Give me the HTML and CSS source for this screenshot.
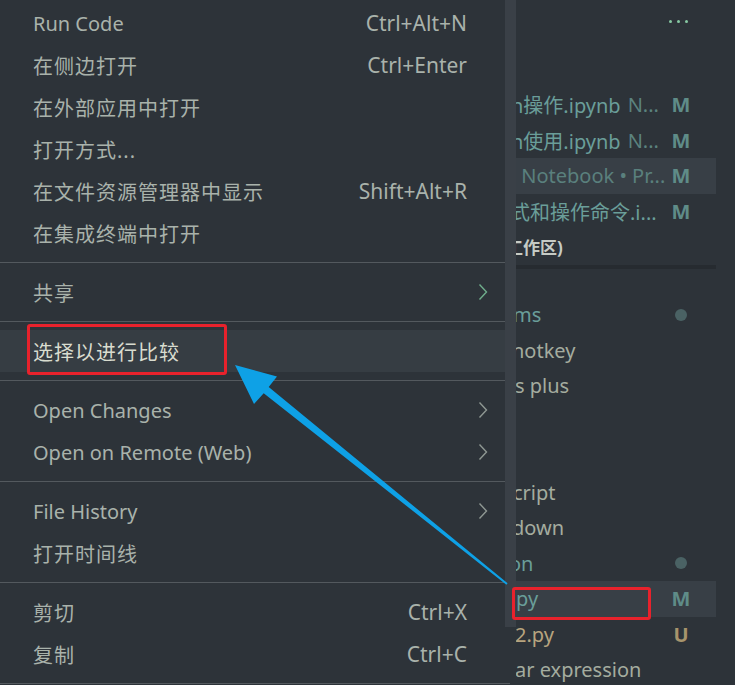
FILE: index.html
```html
<!DOCTYPE html>
<html lang="zh">
<head>
<meta charset="utf-8">
<title>Context menu</title>
<link rel="stylesheet" href="styles.css">
</head>
<body>
<div class="screen">
  <div class="menu">
    <div class="item"><span class="label">Run Code</span><span class="key">Ctrl+Alt+N</span></div>
    <div class="item"><span class="label zh">在侧边打开</span><span class="key">Ctrl+Enter</span></div>
    <div class="item"><span class="label zh">在外部应用中打开</span></div>
    <div class="item"><span class="label zh">打开方式...</span></div>
    <div class="item"><span class="label zh">在文件资源管理器中显示</span><span class="key">Shift+Alt+R</span></div>
    <div class="item"><span class="label zh">在集成终端中打开</span></div>
    <div class="sep"></div>
    <div class="item"><span class="label zh">共享</span><svg class="chev chev-green" viewBox="0 0 10 18" width="10" height="18"><path d="M1.5 1.5 L8.5 9 L1.5 16.5" fill="none" stroke="currentColor" stroke-width="1.4"/></svg></div>
    <div class="sep"></div>
    <div class="item active"><span class="label zh">选择以进行比较</span></div>
    <div class="sep"></div>
    <div class="item"><span class="label">Open Changes</span><svg class="chev" viewBox="0 0 10 18" width="10" height="18"><path d="M1.5 1.5 L8.5 9 L1.5 16.5" fill="none" stroke="currentColor" stroke-width="1.4"/></svg></div>
    <div class="item"><span class="label">Open on Remote (Web)</span><svg class="chev" viewBox="0 0 10 18" width="10" height="18"><path d="M1.5 1.5 L8.5 9 L1.5 16.5" fill="none" stroke="currentColor" stroke-width="1.4"/></svg></div>
    <div class="sep"></div>
    <div class="item"><span class="label">File History</span><svg class="chev" viewBox="0 0 10 18" width="10" height="18"><path d="M1.5 1.5 L8.5 9 L1.5 16.5" fill="none" stroke="currentColor" stroke-width="1.4"/></svg></div>
    <div class="item"><span class="label zh">打开时间线</span></div>
    <div class="sep"></div>
    <div class="item"><span class="label zh">剪切</span><span class="key">Ctrl+X</span></div>
    <div class="item"><span class="label zh">复制</span><span class="key">Ctrl+C</span></div>
    <div class="sep"></div>
    <div class="scroll-thumb"></div>
  </div>

  <div class="sidebar">
    <div class="side-head"><span class="more"><i></i><i></i><i></i></span></div>
    <div class="group">
      <div class="row"><span class="name teal cut5">n操作.ipynb</span><span class="desc">N...</span><span class="badge m">M</span></div>
      <div class="row"><span class="name teal cut5">n使用.ipynb</span><span class="desc">N...</span><span class="badge m">M</span></div>
      <div class="row selected"><span class="name dimteal cut0">&nbsp;Notebook • Pr...</span><span class="badge m">M</span></div>
      <div class="row"><span class="name teal cut6">式和操作命令.i...</span><span class="badge m">M</span></div>
      <div class="row"><span class="name bold cut10">工作区)</span></div>
    </div>
    <div class="divider"></div>
    <div class="group">
      <div class="row"><span class="name teal cut3">ms</span><span class="badge"><b class="dot"></b></span></div>
      <div class="row"><span class="name gray cut4">hotkey</span></div>
      <div class="row"><span class="name gray cut1">s plus</span></div>
      <div class="row"></div>
      <div class="row"></div>
      <div class="row"><span class="name gray cut3">cript</span></div>
      <div class="row"><span class="name gray cut4">down</span></div>
      <div class="row"><span class="name teal cut7">on</span><span class="badge"><b class="dot"></b></span></div>
      <div class="row selected"><span class="name teal cut0">py</span><span class="badge m">M</span></div>
      <div class="row"><span class="name beige cut1">2.py</span><span class="badge u">U</span></div>
      <div class="row"><span class="name gray cut1">ar expression</span></div>
    </div>
  </div>

  <div class="mark mark-menu"></div>
  <div class="mark mark-file"></div>
  <svg class="arrow" viewBox="0 0 735 685" width="735" height="685">
    <polygon fill="#0ea1e6" points="507.6,583.3 506.4,584.7 263.7,393.2 254.0,404.0 235,365 277.0,376.6 268.7,387.0"/>
  </svg>
</div>
</body>
</html>
```
FILE: styles.css
```css
* { box-sizing: border-box; }
html, body { margin: 0; padding: 0; }
body {
  background: #2d3339;
  font-family: "Noto Sans", "Noto Sans CJK SC", sans-serif;
  font-size: 20px;
  color: #a9b2ab;
  width: 735px;
  height: 685px;
  overflow: hidden;
}
.screen {
  position: relative;
  display: flex;
  width: 735px;
  height: 685px;
}
.menu {
  position: relative;
  width: 516px;
  flex: none;
  padding: 2px 6px 0 0;
  background: #2d3339;
}
.item {
  display: flex;
  align-items: center;
  height: 42px;
  padding: 0 22px 0 33px;
  white-space: nowrap;
}
.item .label { flex: 1; }
.item .zh { letter-spacing: 1px; }
.item .key { margin-right: 21px; font-size: 21px; }
.item.active {
  background: #363d43;
  border-radius: 0 5px 5px 0;
  color: #d9dccf;
}
.chev { color: #8f9893; display: block; }
.chev-green { color: #6fae8c; }
.sep {
  height: 1px;
  margin: 8px 0;
  background: #53595e;
}
.menu .sep:last-of-type { margin-bottom: 0; }
.scroll-thumb {
  position: absolute;
  left: 505px;
  top: 0;
  width: 11px;
  height: 627px;
  background: #3a4047;
}

.sidebar {
  flex: 1;
  overflow: hidden;
  background: #2d3339;
}
.side-head {
  height: 87px;
  display: flex;
  justify-content: flex-end;
  padding: 20px 47px 0 0;
}
.more { display: flex; gap: 5px; height: 4px; }
.more i {
  display: block;
  width: 3px;
  height: 3px;
  border-radius: 50%;
  background: #86c9a2;
}
.group { width: 200px; }
.row {
  display: flex;
  align-items: center;
  height: 35.5px;
  padding-right: 25px;
  white-space: nowrap;
}
.row.selected { background: #383f46; }
.name { flex: none; }
.desc { color: #5b827e; margin-left: 7px; flex: none; }
.badge {
  width: 20px;
  margin-left: auto;
  display: flex;
  justify-content: center;
  align-items: center;
  font-weight: 700;
  flex: none;
}
.badge.m { color: #5f8c88; }
.badge.u { color: #a7946c; }
.dot {
  display: block;
  width: 12px;
  height: 12px;
  border-radius: 50%;
  background: #4a6264;
}
.teal { color: #6a9e99; }
.dimteal { color: #5a807d; }
.gray { color: #a4ac9f; }
.beige { color: #b7a47f; }
.bold { font-weight: 700; color: #c6cbc5; font-size: 17px; }
.cut0 { margin-left: 0; }
.cut1 { margin-left: -1px; }
.cut3 { margin-left: -3px; }
.cut4 { margin-left: -4px; }
.cut5 { margin-left: -5px; }
.cut6 { margin-left: -6px; }
.cut7 { margin-left: -7px; }
.cut10 { margin-left: -10px; }
.divider {
  width: 200px;
  height: 32.5px;
  border-top: 4px solid #262b30;
}

.mark {
  position: absolute;
  border: 3px solid #e8222c;
  border-radius: 3px;
}
.mark-menu { left: 27px; top: 324px; width: 200px; height: 51px; }
.mark-file { left: 512px; top: 587px; width: 139px; height: 33px; }
.arrow {
  position: absolute;
  left: 0;
  top: 0;
  pointer-events: none;
}
```
